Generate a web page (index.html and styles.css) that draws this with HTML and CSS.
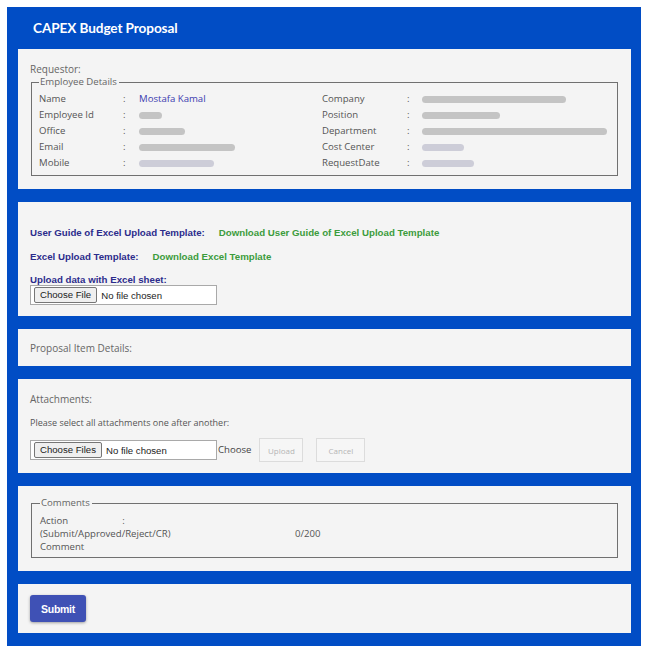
FILE: index.html
```html
<!DOCTYPE html>
<html>
<head>
<meta charset="utf-8">
<link rel="stylesheet" href="styles.css">
</head>
<body>
<div class="page">
  <div class="header"><h1 class="title">CAPEX Budget Proposal</h1></div>

  <section class="panel requestor">
    <div class="caption">Requestor:</div>
    <fieldset class="box">
      <legend>Employee Details</legend>
      <div class="details">
        <span class="lbl">Name</span><span class="colon">:</span><span class="val">Mostafa Kamal</span>
        <span class="lbl">Company</span><span class="colon">:</span><span class="val"><span class="mask" style="width:144px"></span></span>
        <span class="lbl">Employee Id</span><span class="colon">:</span><span class="val"><span class="mask" style="width:23px"></span></span>
        <span class="lbl">Position</span><span class="colon">:</span><span class="val"><span class="mask" style="width:78px"></span></span>
        <span class="lbl">Office</span><span class="colon">:</span><span class="val"><span class="mask" style="width:46px"></span></span>
        <span class="lbl">Department</span><span class="colon">:</span><span class="val"><span class="mask" style="width:185px"></span></span>
        <span class="lbl">Email</span><span class="colon">:</span><span class="val"><span class="mask" style="width:96px"></span></span>
        <span class="lbl">Cost Center</span><span class="colon">:</span><span class="val"><span class="mask light" style="width:42px"></span></span>
        <span class="lbl">Mobile</span><span class="colon">:</span><span class="val"><span class="mask light" style="width:75px"></span></span>
        <span class="lbl">RequestDate</span><span class="colon">:</span><span class="val"><span class="mask light" style="width:52px"></span></span>
      </div>
    </fieldset>
  </section>

  <section class="panel upload">
    <div class="line"><span class="strong">User Guide of Excel Upload Template:</span><a class="dl" href="#">Download User Guide of Excel Upload Template</a></div>
    <div class="line"><span class="strong">Excel Upload Template:</span><a class="dl" href="#">Download Excel Template</a></div>
    <div class="strong upl">Upload data with Excel sheet:</div>
    <div class="file"><span class="fbtn">Choose File</span><span class="ftext">No file chosen</span></div>
  </section>

  <section class="panel items">
    <div class="caption">Proposal Item Details:</div>
  </section>

  <section class="panel attach">
    <div class="caption">Attachments:</div>
    <div class="hint">Please select all attachments one after another:</div>
    <div class="attach-row">
      <div class="file"><span class="fbtn">Choose Files</span><span class="ftext">No file chosen</span></div>
      <span class="choose">Choose</span>
      <button class="ghost up">Upload</button>
      <button class="ghost cancel">Cancel</button>
    </div>
  </section>

  <section class="panel comments">
    <fieldset class="box cbox">
      <legend>Comments</legend>
      <div class="crow">
        <div class="clbl">
          <div>Action<span class="ccolon">:</span></div>
          <div>(Submit/Approved/Reject/CR)</div>
          <div>Comment</div>
        </div>
        <div class="count">0/200</div>
      </div>
    </fieldset>
  </section>

  <section class="panel actions">
    <button class="submit">Submit</button>
  </section>
</div>
</body>
</html>
```
FILE: styles.css
```css
* { box-sizing: border-box; }
html, body { margin: 0; padding: 0; background: #ffffff; }
body { font-family: "Open Sans", "Noto Sans", sans-serif; }

.page {
  margin: 7px;
  background: #014dc5;
  padding: 0 10px 13px 11px;
  display: flex;
  flex-direction: column;
  gap: 13px;
  min-height: 639px;
}

.header { height: 29px; display: flex; align-items: center; padding-left: 15px; }
.title {
  margin: 0;
  margin-top: 13px;
  color: #ffffff;
  font-family: "Lato", sans-serif;
  font-weight: 700;
  font-size: 13.6px;
  letter-spacing: -0.1px;
}

.panel {
  background: #f4f4f4;
  padding: 0 13px 0 12px;
  font-size: 9.6px;
  color: #555;
}

.caption { font-size: 10px; color: #666; line-height: 14px; }

.requestor { height: 140px; padding-top: 13px; }
.box {
  margin: 0 0 0 1px;
  border: 1px solid #707070;
  padding: 0 7px 5px 7px;
}
.box legend { padding: 0 2px 0 1px; font-size: 9.6px; color: #666; line-height: 12px; }
.details {
  display: grid;
  grid-template-columns: 84px 16px 183px 85px 15px 1fr;
  grid-auto-rows: 15.8px;
  align-items: center;
  margin-top: 3px;
}
.lbl { color: #555; }
.colon { color: #555; }
.val { color: #3b3bb0; display: flex; align-items: center; }
.mask {
  display: inline-block;
  height: 7px;
  margin-top: 2px;
  border-radius: 4px;
  background: #c4c4c4;
}
.mask.light { background: #cdcdd8; }

.upload { height: 114px; padding-top: 25px; font-family: "Liberation Sans", Arial, sans-serif; }
.strong { font-weight: 700; color: #2c2c8c; font-size: 9.7px; }
.line { display: flex; height: 24px; align-items: flex-start; }
.line .strong { margin-right: 14px; }
.dl { color: #3c9c3c; font-weight: 700; text-decoration: none; font-size: 9.7px; }
.upl { line-height: 10px; }

.file {
  width: 187px;
  height: 20px;
  background: #fff;
  border: 1px solid #a9a9a9;
  display: flex;
  align-items: center;
  padding-left: 3px;
  font-family: "Liberation Sans", Arial, sans-serif;
  font-size: 9.6px;
  color: #222;
}
.fbtn {
  border: 1px solid #767676;
  background: #efefef;
  border-radius: 2px;
  padding: 1px 5px;
  line-height: 12px;
  margin-right: 4px;
}

.items { height: 37px; display: flex; align-items: center; }

.attach { height: 94px; padding-top: 13px; }
.hint { margin-top: 10px; font-size: 9px; color: #555; }
.attach-row { display: flex; align-items: center; margin-top: 9px; }
.choose { font-size: 9.6px; color: #444; margin-left: 1px; margin-right: 8px; margin-top: -2px; }
.ghost {
  font-family: "Open Sans", sans-serif;
  font-size: 8px;
  color: #b5b5b5;
  background: #f6f6f6;
  border: 1px solid #dcdcdc;
  height: 24px;
  padding: 0;
  margin: 0;
}
.up { width: 44px; margin-right: 13px; }
.cancel { width: 49px; }

.comments { height: 85px; padding-top: 11px; }
.cbox { padding: 0 8px 4px 8px; }
.crow { display: flex; line-height: 13px; margin-top: 5px; }
.clbl { width: 255px; font-size: 9.6px; color: #555; }
.ccolon { margin-left: 54px; }
.count { padding-top: 13px; font-size: 9.6px; color: #555; }

.actions { height: 49px; padding-top: 11px; }
.submit {
  background: #3f51b5;
  color: #fff;
  border: none;
  border-radius: 3px;
  font-family: "Liberation Sans", Arial, sans-serif;
  font-weight: 700;
  font-size: 10.5px;
  width: 56px;
  height: 27px;
  box-shadow: 0 1px 3px rgba(0,0,0,0.35);
  letter-spacing: -0.3px;
}
```
